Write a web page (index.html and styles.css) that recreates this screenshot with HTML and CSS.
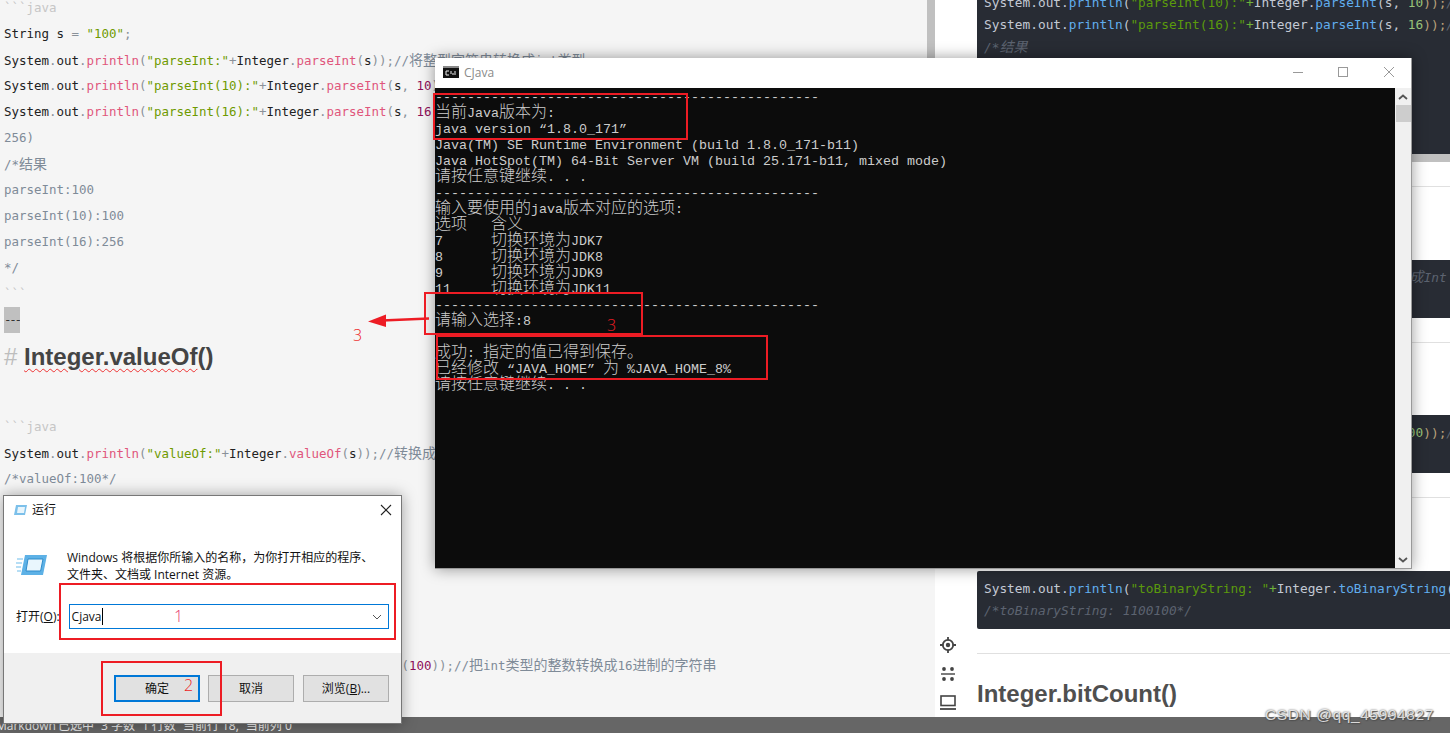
FILE: index.html
```html
<!DOCTYPE html>
<html lang="zh">
<head>
<meta charset="utf-8">
<title>CJava</title>
<link rel="stylesheet" href="styles.css">
</head>
<body>
<div class="app">
  <div class="main">
    <section class="editor">
      <div class="line fade">```java</div>
      <div class="line"><b>String s</b> <i>=</i> <em>"100"</em><i>;</i></div>
      <div class="line"><b>System</b><i>.</i><b>out</b><i>.</i><u>println</u><i>(</i><em>"parseInt:"</em><i>+</i><b>Integer</b><i>.</i><u>parseInt</u><i>(</i><b>s</b><i>));</i><s>//<span class="cj">将整型字符串转换成</span>int<span class="cj">类型</span></s></div>
      <div class="line"><b>System</b><i>.</i><b>out</b><i>.</i><u>println</u><i>(</i><em>"parseInt(10):"</em><i>+</i><b>Integer</b><i>.</i><u>parseInt</u><i>(</i><b>s</b><i>,</i> <tt>10</tt><i>));</i></div>
      <div class="line"><b>System</b><i>.</i><b>out</b><i>.</i><u>println</u><i>(</i><em>"parseInt(16):"</em><i>+</i><b>Integer</b><i>.</i><u>parseInt</u><i>(</i><b>s</b><i>,</i> <tt>16</tt><i>));</i></div>
      <div class="line"><s>256)</s></div>
      <div class="line"><s>/*<span class="cj">结果</span></s></div>
      <div class="line"><s>parseInt:100</s></div>
      <div class="line"><s>parseInt(10):100</s></div>
      <div class="line"><s>parseInt(16):256</s></div>
      <div class="line"><s>*/</s></div>
      <div class="line fade">```</div>
      <div class="line"><span class="selected">---</span></div>
      <h1 class="md-heading"><span class="hash">#</span> <span class="typo">Integer.valueOf</span>()</h1>
      <div class="line fade">```java</div>
      <div class="line"><b>System</b><i>.</i><b>out</b><i>.</i><u>println</u><i>(</i><em>"valueOf:"</em><i>+</i><b>Integer</b><i>.</i><u>valueOf</u><i>(</i><b>s</b><i>));</i><s>//<span class="cj">转换成</span>Integer</s></div>
      <div class="line"><s>/*valueOf:100*/</s></div>
      <div class="editor-gap"></div>
      <div class="line"><b>System</b><i>.</i><b>out</b><i>.</i><u>println</u><i>(</i><em>"toHexString:"</em><i>+</i><b>Integer</b><i>.</i><u>toHexString</u><i>(</i><tt>100</tt><i>));</i><s>//<span class="cj">把</span>int<span class="cj">类型的整数转换成</span>16<span class="cj">进制的字符串</span></s></div>
    </section>
    <div class="editor-scroll"><div class="editor-thumb"></div></div>
    <section class="preview">
      <pre class="code first"><code><span class="o">System.out.</span><span class="f">println</span><span class="o">(</span><span class="st">"parseInt(10):"</span><span class="g">+</span><span class="o">Integer.</span><span class="f">parseInt</span><span class="o">(s, </span><span class="n">10</span><span class="p">));</span><span class="cm">//</span>
<span class="o">System.out.</span><span class="f">println</span><span class="o">(</span><span class="st">"parseInt(16):"</span><span class="g">+</span><span class="o">Integer.</span><span class="f">parseInt</span><span class="o">(s, </span><span class="n">16</span><span class="p">));</span><span class="cm">//</span>
<span class="cm">/*<span class="cmc">结果</span></span></code></pre>
      <div class="code-scroll"></div>
      <hr class="rule r1">
      <pre class="code b2"><code><span class="o">System.out.</span><span class="f">println</span><span class="o">(Integer.</span><span class="f">parseInt</span><span class="o">(s));</span><span class="cm">//<span class="cmw">把字符串型转换成</span>Int</span>
<span class="cm">/*100*/</span></code></pre>
      <hr class="rule r2">
      <pre class="code b3"><code><span class="o">System.out.</span><span class="f">println</span><span class="o">(</span><span class="st">"toHexString:"</span><span class="g">+</span><span class="o">Integer.</span><span class="f">toHexString</span><span class="o">(</span><span class="n">100</span><span class="p">));</span><span class="cm">//</span>
<span class="cm">/*64*/</span></code></pre>
      <hr class="rule r3">
      <pre class="code b4"><code><span class="o">System.out.</span><span class="f">println</span><span class="o">(</span><span class="st">"toBinaryString: "</span><span class="g">+</span><span class="o">Integer.</span><span class="f">toBinaryString</span><span class="o">(</span><span class="n">100</span><span class="p">));</span>
<span class="cm">/*toBinaryString: 1100100*/</span></code></pre>
      <hr class="rule r4">
      <h2 class="pv-heading">Integer.bitCount()</h2>
      <div class="side-tools">
        <svg class="tool" viewBox="0 0 18 18" width="18" height="18"><circle cx="9" cy="9" r="5.2" fill="none" stroke="#444" stroke-width="1.8"/><circle cx="9" cy="9" r="2.2" fill="#444"/><path d="M9 1v3.5M9 13.5V17M1 9h3.5M13.5 9H17" stroke="#444" stroke-width="1.8"/></svg>
        <svg class="tool" viewBox="0 0 18 18" width="18" height="18"><path d="M2 9h14" stroke="#444" stroke-width="1.4"/><circle cx="5" cy="4" r="1.9" fill="#444"/><circle cx="13" cy="4" r="1.9" fill="#444"/><circle cx="5" cy="14" r="1.9" fill="#444"/><circle cx="13" cy="14" r="1.9" fill="#444"/></svg>
        <svg class="tool" viewBox="0 0 18 18" width="18" height="18"><rect x="2" y="3" width="14" height="9.5" fill="none" stroke="#444" stroke-width="1.6"/><path d="M1 16h16" stroke="#444" stroke-width="1.8"/></svg>
      </div>
    </section>
  </div>
  <footer class="status">
    <span class="st-md">Markdown</span><span>已选中</span><span>3 字数</span><span>1 行数</span><span>当前行 18,</span><span>当前列 0</span>
  </footer>
</div>

<div class="console-win">
  <div class="con-title">
    <svg class="con-icon" viewBox="0 0 16 12" width="16" height="12"><rect width="16" height="12" fill="#111"/><rect x="0" y="0" width="16" height="2" fill="#888"/><path d="M3 5h3M3 5v4h3M8 5v3M9 8h2M12 5v4" stroke="#eee" stroke-width="1" fill="none"/></svg>
    <span class="con-name">CJava</span>
    <span class="con-controls">
      <svg viewBox="0 0 12 12" width="12" height="12"><path d="M1 6.5h10" stroke="#999"/></svg>
      <svg viewBox="0 0 12 12" width="12" height="12"><rect x="1.5" y="1.5" width="9" height="9" fill="none" stroke="#999"/></svg>
      <svg class="con-x" viewBox="0 0 12 12" width="12" height="12"><path d="M1 1l10 10M11 1L1 11" stroke="#999"/></svg>
    </span>
  </div>
  <div class="con-body">
    <div class="con-text">
      <div class="row">------------------------------------------------</div>
      <div class="row"><span class="c">当前</span>Java<span class="c">版本为</span>:</div>
      <div class="row">java version “1.8.0_171”</div>
      <div class="row">Java(TM) SE Runtime Environment (build 1.8.0_171-b11)</div>
      <div class="row">Java HotSpot(TM) 64-Bit Server VM (build 25.171-b11, mixed mode)</div>
      <div class="row"><span class="c">请按任意键继续</span>. . .</div>
      <div class="row">------------------------------------------------</div>
      <div class="row"><span class="c">输入要使用的</span>java<span class="c">版本对应的选项</span>:</div>
      <div class="row"><span class="c">选项</span>   <span class="c">含义</span></div>
      <div class="row">7      <span class="c">切换环境为</span>JDK7</div>
      <div class="row">8      <span class="c">切换环境为</span>JDK8</div>
      <div class="row">9      <span class="c">切换环境为</span>JDK9</div>
      <div class="row">11     <span class="c">切换环境为</span>JDK11</div>
      <div class="row">------------------------------------------------</div>
      <div class="row"><span class="c">请输入选择</span>:8</div>
      <div class="row"> </div>
      <div class="row"><span class="c">成功</span>: <span class="c">指定的值已得到保存。</span></div>
      <div class="row"><span class="c">已经修改</span> “JAVA_HOME” <span class="c">为</span> %JAVA_HOME_8%</div>
      <div class="row"><span class="c">请按任意键继续</span>. . .</div>
    </div>
    <div class="con-scroll">
      <svg class="chev" viewBox="0 0 10 6" width="10" height="6"><path d="M1 5l4-3.5L9 5" fill="none" stroke="#555" stroke-width="1.8"/></svg>
      <div class="thumb"></div>
      <svg class="chev down" viewBox="0 0 10 6" width="10" height="6"><path d="M1 1l4 3.5L9 1" fill="none" stroke="#555" stroke-width="1.8"/></svg>
    </div>
  </div>
</div>

<div class="run-win">
  <div class="run-title">
    <svg class="run-icon" viewBox="0 0 16 14" width="16" height="14"><path d="M4 2h11l-2 10H2z" fill="#7cc0ea"/><path d="M6 4h7l-1 6H5z" fill="#e8f5fc"/></svg>
    <span>运行</span>
    <svg class="run-close" viewBox="0 0 12 12" width="12" height="12"><path d="M1 1l10 10M11 1L1 11" stroke="#222" stroke-width="1.1"/></svg>
  </div>
  <div class="run-content">
    <div class="run-intro">
      <svg class="run-big" viewBox="0 0 32 24" width="32" height="24"><path d="M1 6h6M0 10h6M0 14h5M1 18h4" stroke="#9fd3f2" stroke-width="1.4"/><path d="M9 2h22l-4 20H5z" fill="#5db1e6"/><path d="M12 6h15l-2.4 12H10z" fill="#e9f6fd" stroke="#2f8ccb"/></svg>
      <p>Windows 将根据你所输入的名称，为你打开相应的程序、<br>文件夹、文档或 Internet 资源。</p>
    </div>
    <div class="run-open">
      <label>打开(<span class="ul">O</span>):</label>
      <div class="run-input"><span>Cjava</span><span class="caret"></span>
        <svg class="combo" viewBox="0 0 10 6" width="10" height="6"><path d="M1 1l4 4 4-4" fill="none" stroke="#555"/></svg>
      </div>
    </div>
  </div>
  <div class="run-foot">
    <button class="btn primary">确定</button>
    <button class="btn">取消</button>
    <button class="btn browse">浏览(<span class="ul">B</span>)...</button>
  </div>
</div>

<div class="mark m-a"></div>
<div class="mark m-b"></div>
<div class="mark m-c"></div>
<div class="mark m-d"></div>
<div class="mark m-e"></div>
<span class="num n1">3</span>
<span class="num n2">3</span>
<span class="num n3">1</span>
<span class="num n4">2</span>
<svg class="arrow" viewBox="0 0 62 14" width="62" height="14"><path d="M61 4.5L14 6.5" stroke="#ed1c24" stroke-width="2.4"/><path d="M0 7.5L18 0.5V13z" fill="#ed1c24"/></svg>
<div class="watermark">CSDN @qq_45994827</div>
</body>
</html>
```
FILE: styles.css
```css
* { box-sizing: border-box; }
html, body { margin: 0; padding: 0; }
body {
  position: relative;
  width: 1450px;
  height: 733px;
  overflow: hidden;
  background: #f5f5f5;
  font-family: "Open Sans", "Noto Sans CJK SC", sans-serif;
}
.app { display: flex; flex-direction: column; height: 733px; }
.main { flex: 1; display: flex; min-height: 0; overflow: hidden; }

/* editor */
.editor {
  width: 927px;
  flex: none;
  overflow: hidden;
  background: #f5f5f5;
  padding: 0 0 0 4px;
  font: 12.46px/26px "DejaVu Sans Mono", "Noto Sans CJK SC", monospace;
  color: #7f8b98;
}
.line { height: 26px; white-space: pre; }
.line:first-child { margin-top: -5px; }
.line b { font-weight: 400; color: #222; }
.line i { font-style: normal; color: #8a9199; }
.line em { font-style: normal; color: #6f9a00; }
.line u { text-decoration: none; color: #e0567c; }
.line s { text-decoration: none; color: #7f8b98; }
.line tt { font: inherit; color: #8f0f5a; }
.cj { font-size: 14px; }
.fade { color: #c6c6c6; }
.selected {
  display: inline-block;
  height: 26px;
  width: 16px;
  background: #c0c0c0;
  color: #333;
  overflow: hidden;
  letter-spacing: -2.2px;
}
.md-heading {
  margin: 6px 0 39px;
  height: 36px;
  font: 700 24px/36px "Liberation Sans", sans-serif;
  color: #444;
}
.hash { color: #bdbdbd; font-weight: 400; }
.typo { text-decoration: underline wavy #e33 1px; text-underline-offset: 3px; }
.editor-gap { height: 160px; }

.editor-scroll { width: 8px; flex: none; background: #f5f5f5; }
.editor-thumb { height: 300px; background: #c0c0c0; }

/* preview */
.preview {
  position: relative;
  flex: 1;
  min-width: 0;
  overflow: hidden;
  background: #fff;
  padding-left: 42px;
  font-family: "DejaVu Sans Mono", "Noto Sans CJK SC", monospace;
}
.code {
  margin: 0;
  height: 58px;
  padding: 7px 0 0 7px;
  background: #282c34;
  border-radius: 2px 0 0 2px;
  white-space: pre;
  overflow: hidden;
  font: 12.8px/21.5px "DejaVu Sans Mono", "Noto Sans CJK SC", monospace;
  color: #abb2bf;
}
.code code { font: inherit; }
.code.first { padding-top: 0; border-radius: 0; margin-top: -8px; height: 162px; line-height: 22px; }
.code-scroll { height: 8px; background: #c0c0c0; }
.o { color: #c3c9d4; }
.f { color: #61aeee; }
.st { color: #5b9a0c; }
.g { color: #6fb13a; }
.n { color: #98c379; }
.p { color: #b9a07a; }
.cm { color: #5c6370; font-style: italic; }
.cmc { font-size: 14px; }
.cmw { font-size: 14.5px; }
.rule { border: 0; height: 1px; background: #e0e0e0; margin: 0; }
.r1 { margin-top: 24px; }
.b2 { margin-top: 73px; }
.r2 { margin-top: 24px; }
.b3 { margin-top: 72px; }
.r3 { margin-top: 24px; }
.b4 { margin-top: 73px; }
.r4 { margin-top: 24px; }
.pv-heading {
  margin: 26px 0 0;
  font: 700 24px/28px "Liberation Sans", sans-serif;
  color: #4f4f4f;
}
.side-tools {
  position: absolute;
  left: 4px;
  top: 636px;
  display: flex;
  flex-direction: column;
  gap: 10.5px;
}
.tool { display: block; }

/* status */
.status {
  height: 16px;
  flex: none;
  display: flex;
  gap: 7px;
  padding: 1px 0 0 0;
  background: #666;
  color: #eeeeee;
  font: 12px/16px "Open Sans", "Noto Sans CJK SC", sans-serif;
  margin-left: -4px;
}
.st-md { margin-right: -5px; }

/* console window */
.console-win {
  position: absolute;
  left: 435px;
  top: 58px;
  width: 977px;
  height: 511px;
  background: #fff;
  box-shadow: 0 0 14px rgba(0,0,0,.4);
  border-right: 1px solid #999;
  border-bottom: 1px solid #999;
  display: flex;
  flex-direction: column;
}
.con-title {
  height: 30px;
  flex: none;
  display: flex;
  align-items: center;
  padding: 0 0 2px 8px;
  gap: 5px;
}
.con-name { color: #8a8a8a; font-size: 12px; }
.con-controls { margin-left: auto; display: flex; gap: 33px; padding-right: 17px; }
.con-x { margin-left: 1px; margin-right: -1px; }
.con-body { flex: 1; display: flex; min-height: 0; }
.con-text {
  flex: 1;
  background: #0c0c0c;
  color: #cccccc;
  overflow: hidden;
  font: 13.33px/16px "Liberation Mono", monospace;
}
.row { height: 16px; white-space: pre; }
.row:first-child { margin-top: -2px; }
.row::before { content: "\200b"; font: 16px/16px "Noto Sans CJK SC", sans-serif; }
.c { font: 300 16px/16px "Noto Sans CJK SC", sans-serif; }
.con-scroll {
  width: 16px;
  flex: none;
  background: #f0f0f0;
  position: relative;
  display: flex;
  flex-direction: column;
  align-items: center;
  padding-top: 6px;
}
.chev { display: block; }
.thumb { width: 15px; height: 17px; background: #cdcdcd; margin-top: 5px; }
.down { margin-top: auto; margin-bottom: 5px; }

/* run dialog */
.run-win {
  position: absolute;
  left: 3px;
  top: 495px;
  width: 399px;
  height: 229px;
  background: #fff;
  border: 1px solid #777;
  box-shadow: 0 0 14px rgba(0,0,0,.35);
  display: flex;
  flex-direction: column;
  font: 12px/17px "Open Sans", "Noto Sans CJK SC", sans-serif;
  color: #111;
}
.run-title {
  height: 27px;
  flex: none;
  display: flex;
  align-items: center;
  gap: 4px;
  padding: 0 9px 0 8px;
}
.run-close { margin-left: auto; }
.run-content { flex: 1; padding: 0 0 0 12px; }
.run-intro { display: flex; gap: 19px; padding-top: 26px; height: 76px; }
.run-intro p { margin: 0; }
.run-big { margin-top: 4px; flex: none; }
.run-open { display: flex; align-items: center; gap: 9px; margin-top: 5px; }
.run-open label { white-space: nowrap; }
.ul { text-decoration: underline; }
.run-input {
  width: 320px;
  height: 25px;
  border: 1px solid #0078d7;
  display: flex;
  align-items: center;
  padding: 0 3px 0 2px;
}
.caret { width: 1px; height: 17px; background: #000; }
.combo { margin-left: auto; margin-right: 3px; }
.run-foot {
  height: 70px;
  flex: none;
  background: #f0f0f0;
  display: flex;
  gap: 8px;
  padding: 22px 0 0 110px;
}
.btn {
  width: 86px;
  height: 27px;
  border: 1px solid #adadad;
  background: #e1e1e1;
  padding: 0;
  color: #111;
  font: 12px/17px "Open Sans", "Noto Sans CJK SC", sans-serif;
}
.primary { border: 2px solid #0078d7; }
.browse { margin-left: 1px; }

/* annotations */
.mark { position: absolute; border: 2px solid #ed1c24; }
.m-a { left: 433px; top: 93px; width: 255px; height: 47px; }
.m-b { left: 424px; top: 292px; width: 219px; height: 43px; }
.m-c { left: 436px; top: 335px; width: 332px; height: 45px; }
.m-d { left: 59px; top: 583px; width: 337px; height: 57px; }
.m-e { left: 101px; top: 661px; width: 121px; height: 55px; }
.num { position: absolute; color: #ed1c24; font: 300 16px/18px "Open Sans", sans-serif; }
.n1 { left: 607px; top: 316px; }
.n2 { left: 353px; top: 326px; }
.n3 { left: 174px; top: 607px; color: #e8336a; }
.n4 { left: 184px; top: 676px; }
.arrow { position: absolute; left: 368px; top: 314px; }
.watermark {
  position: absolute;
  left: 1265px;
  top: 706px;
  color: rgba(255,255,255,.78);
  font: 15.5px/18px "Liberation Sans", sans-serif;
  letter-spacing: .6px;
  text-shadow: 0 0 2px #444, 1px 1px 1px #555;
}
```
